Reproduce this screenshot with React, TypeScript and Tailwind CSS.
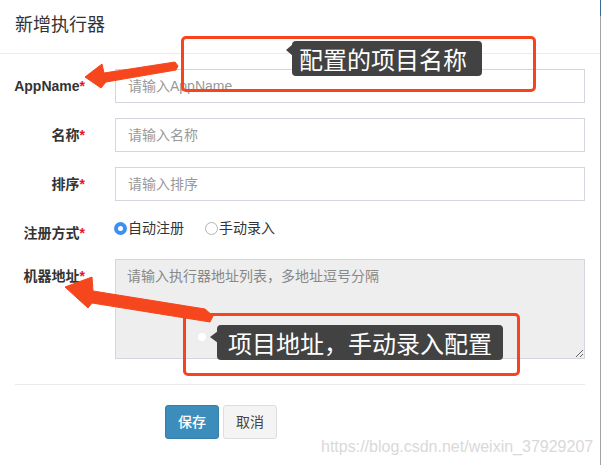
import React from "react";

const cjk = { fontFamily: '"Liberation Sans", "Noto Sans CJK SC", sans-serif' };

function Label({ text }: { text: string }) {
  return (
    <div className="w-[85px] shrink-0 pt-[7px] text-right text-[14px] leading-[20px] font-bold text-[#333]">
      {text}
      <span className="text-[#e8112d]">*</span>
    </div>
  );
}

function Field({ label, placeholder }: { label: string; placeholder: string }) {
  return (
    <div className="flex mb-[15px]">
      <Label text={label} />
      <input
        className="ml-[30px] w-[470px] h-[34px] border border-[#d2d6de] px-[12px] text-[14px] text-[#555] placeholder:text-[#999] outline-none"
        placeholder={placeholder}
        style={cjk}
      />
    </div>
  );
}

export default function App() {
  return (
    <div className="relative flex w-[601px] h-[465px] bg-white overflow-hidden" style={cjk}>
      <div className="w-[600px] flex flex-col">
        <div className="h-[54px] border-b border-[#ececec] px-[15px] flex items-center">
          <div className="text-[18px] leading-[25px] text-[#333] -mt-[2px]">新增执行器</div>
        </div>
        <div className="pt-[15px]">
          <Field label="AppName" placeholder="请输入AppName" />
          <Field label="名称" placeholder="请输入名称" />
          <Field label="排序" placeholder="请输入排序" />
          <div className="flex mb-[15px] h-[28px]">
            <Label text="注册方式" />
            <div className="ml-[29px] flex items-center h-[20px] mt-[2px] text-[14px] leading-[20px] text-[#333]">
              <span className="w-[13px] h-[13px] rounded-full bg-[#3f8ff2] flex items-center justify-center">
                <span className="w-[5px] h-[5px] rounded-full bg-white" />
              </span>
              <span className="ml-[1px]">自动注册</span>
              <span className="ml-[21px] w-[13px] h-[13px] rounded-full border border-[#b4b4b4] bg-white" />
              <span className="ml-[1px]">手动录入</span>
            </div>
          </div>
          <div className="flex">
            <Label text="机器地址" />
            <textarea
              className="ml-[30px] w-[470px] h-[100px] border border-[#d2d6de] bg-[#eeeeee] px-[11px] py-[6px] text-[14px] leading-[20px] placeholder:text-[#888] outline-none"
              placeholder="请输入执行器地址列表，多地址逗号分隔"
              style={cjk}
            />
          </div>
        </div>
        <div className="mt-[25px] mx-[15px] h-px bg-[#ebebeb]" />
        <div className="mt-[20px] flex pl-[165px] gap-[4px]">
          <button className="w-[54px] h-[34px] rounded-[3px] bg-[#3c8dbc] border border-[#367fa9] text-white text-[14px] font-medium">
            保存
          </button>
          <button className="w-[54px] h-[34px] rounded-[3px] bg-[#f4f4f4] border border-[#dddddd] text-[#444] text-[14px]">
            取消
          </button>
        </div>
      </div>
      <div className="w-px flex flex-col">
        <div className="h-[16px] bg-[#3a6f93]" />
        <div className="flex-1 bg-[#a3a3a3]" />
      </div>

      {/* watermark */}
      <div
        className="absolute left-[321px] top-[437px] text-[16px] leading-[20px] text-[#d9d9d9] whitespace-nowrap"
        style={{ fontFamily: '"Liberation Sans", sans-serif' }}
      >
        https://blog.csdn.net/weixin_37929207
      </div>

      {/* annotations */}
      <div className="absolute left-[181px] top-[36px] w-[355px] h-[56px] border-[3px] border-[#f8431f] rounded-[5px]" />
      <div className="absolute left-[183px] top-[313px] w-[337px] h-[63px] border-[3px] border-[#f8431f] rounded-[5px]" />

      <div
        className="absolute left-[292px] top-[41px] w-[190px] h-[35px] rounded-[4px] bg-[#424242] text-white text-[24px] leading-[35px] pl-[7px] whitespace-nowrap"
        style={{ fontFamily: '"Noto Sans CJK SC", sans-serif' }}
      >
        配置的项目名称
      </div>
      <div
        className="absolute left-[217px] top-[325px] w-[286px] h-[35px] rounded-[4px] bg-[#424242] text-white text-[24px] leading-[35px] pl-[11px] whitespace-nowrap"
        style={{ fontFamily: '"Noto Sans CJK SC", sans-serif' }}
      >
        项目地址，手动录入配置
      </div>
      <div className="absolute left-[198px] top-[333px] w-[8px] h-[8px] rounded-full bg-white" />

      <svg className="absolute left-0 top-0 pointer-events-none" width="601" height="465" viewBox="0 0 601 465">
        <polygon points="286,50 293,44 293,56" fill="#424242" />
        <polygon points="210,337 218,331 218,343" fill="#424242" />
        <polygon
          points="85,77 102,64 104,73 175,62 178,66 176,70 106,82 101,88"
          fill="#f6461d"
          stroke="#f6461d"
          strokeWidth="1"
          strokeLinejoin="round"
        />
        <polygon
          points="65,287 92,277 93,291 205,309 213,316 210,322 92,303 88,308"
          fill="#f6461d"
          stroke="#f6461d"
          strokeWidth="1"
          strokeLinejoin="round"
        />
      </svg>
    </div>
  );
}
